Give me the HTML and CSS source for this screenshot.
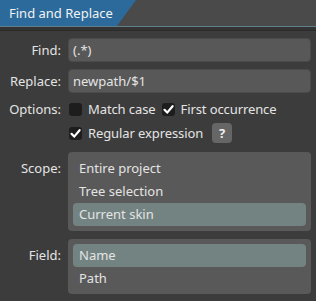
FILE: index.html
```html
<html>
    <head>
        <title>Find and Replace</title>
        <link rel="stylesheet" href="styles.css">
    </head>
    <body>
        <div class='panel'>
            <div class='panel-header'>
                <div class='tab'><span>Find and Replace</span></div>
            </div>
            <div class='panel-strip'></div>
            <div class='form'>
                <label class='label'>Find:</label>
                <div class='input'>(.*)</div>

                <label class='label'>Replace:</label>
                <div class='input'>newpath/$1</div>

                <label class='label label-options'>Options:</label>
                <div class='options'>
                    <div class='option-row'>
                        <span class='check'></span>
                        <span class='option-text'>Match case</span>
                        <span class='check checked'>
                            <svg width='13' height='13' viewBox='0 0 13 13'><path d='M2.5 6.8 L5.2 9.6 L10.6 3.2' stroke='#fff' stroke-width='2.2' fill='none' stroke-linecap='round' stroke-linejoin='round'/></svg>
                        </span>
                        <span class='option-text'>First occurrence</span>
                    </div>
                    <div class='option-row'>
                        <span class='check checked'>
                            <svg width='13' height='13' viewBox='0 0 13 13'><path d='M2.5 6.8 L5.2 9.6 L10.6 3.2' stroke='#fff' stroke-width='2.2' fill='none' stroke-linecap='round' stroke-linejoin='round'/></svg>
                        </span>
                        <span class='option-text'>Regular expression</span>
                        <button class='help'>?</button>
                    </div>
                </div>

                <label class='label label-list label-scope'>Scope:</label>
                <div class='list list-scope'>
                    <div class='item'>Entire project</div>
                    <div class='item'>Tree selection</div>
                    <div class='item selected'>Current skin</div>
                </div>

                <label class='label label-list'>Field:</label>
                <div class='list list-field'>
                    <div class='item selected'>Name</div>
                    <div class='item'>Path</div>
                </div>
            </div>
        </div>
    </body>
</html>
```

FILE: styles.css
```css
body{
    margin: 0;
    background-color: #3c3c3c;
    font-family: "Noto Sans", "Open Sans", sans-serif;
    font-size: 13px;
    color: #e4e4e4;
}

.panel{
    width: 316px;
    height: 301px;
    overflow: hidden;
}

.panel-header{
    height: 26px;
    background-color: #4a4a4a;
    border-bottom: 1px solid #5f8089;
    display: flex;
}
.tab{
    width: 136px;
    height: 26px;
    background-color: #2b6a9a;
    clip-path: polygon(0 0, 136px 0, 117px 26px, 0 26px);
    display: flex;
    align-items: center;
    padding-left: 9px;
    box-sizing: border-box;
    color: #f2f2f2;
}

.panel-strip{
    height: 3px;
    background-color: #333333;
    border-bottom: 1px solid #2b2b2b;
}

.form{
    display: grid;
    grid-template-columns: 56px 1fr;
    column-gap: 7px;
    padding: 7px 5px 0 5px;
}

.label{
    text-align: right;
    line-height: 24px;
    height: 24px;
}

.input{
    height: 24px;
    box-sizing: border-box;
    background-color: #585858;
    border: 1px solid #4b4b4b;
    border-radius: 4px;
    padding-left: 4px;
    line-height: 22px;
    margin-bottom: 7px;
}

.label-options{
    margin-top: -1px;
    line-height: 20px;
}
.options{
    margin-top: -1px;
    display: grid;
    row-gap: 4px;
    margin-bottom: 9px;
}
.option-row{
    height: 20px;
    display: flex;
    align-items: center;
}
.check{
    width: 13px;
    height: 13px;
    margin-left: 1px;
    border-radius: 3px;
    background-color: #1d1d1d;
    display: flex;
    align-items: center;
    justify-content: center;
    flex-shrink: 0;
}
.option-text{
    margin-left: 6px;
    margin-right: 5px;
    letter-spacing: -0.1px;
}
.help{
    width: 20px;
    height: 20px;
    margin-left: 4px;
    padding: 0;
    border: none;
    border-radius: 4px;
    background-color: #666666;
    color: #f0f0f0;
    font-family: "Noto Sans", sans-serif;
    font-size: 13px;
    font-weight: 700;
}

.list{
    background-color: #595959;
    border-radius: 4px;
    padding: 5px 5px;
    box-sizing: border-box;
}
.list-scope{
    height: 79px;
    margin-bottom: 8px;
}
.list-field{
    height: 55px;
    padding-bottom: 4px;
}
.label-list{
    padding-top: 5px;
    line-height: 23px;
}
.item{
    height: 23px;
    line-height: 23px;
    padding-left: 6px;
    border-radius: 4px;
}
.item.selected{
    background-color: #738381;
}
```
